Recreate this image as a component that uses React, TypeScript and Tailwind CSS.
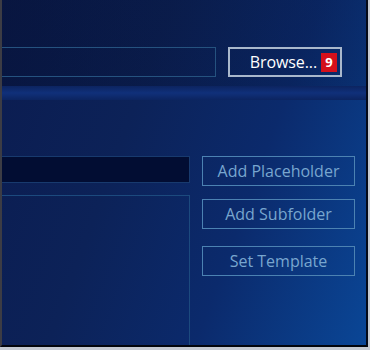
import React from "react";

export default function App() {
  const font = { fontFamily: '"Open Sans", "Noto Sans", sans-serif' };
  return (
    <div className="w-[370px] h-[350px] bg-[#c5cad2] pr-[2px] pb-[3px]" style={font}>
      <div className="h-full flex flex-col border-l-2 border-l-[#3c3c44] border-r-2 border-r-[#050a18] border-b-2 border-b-[#02050c] bg-[linear-gradient(110deg,#0b1c50_0%,#0c2258_35%,#0b2a6c_65%,#0a4696_100%)]">
        {/* top section */}
        <div className="h-[86px] flex items-start pt-[47px] bg-[linear-gradient(90deg,rgba(4,12,40,0.4),rgba(4,12,40,0.15))]">
          <div className="w-[214px] h-[30px] border border-[#25527f] border-l-0" />
          <button className="ml-[12px] w-[114px] h-[30px] border-2 border-[#a9b8cc] flex items-center justify-end pr-[3px] gap-[4px]">
            <span className="text-[16px] text-white tracking-[-0.1px]">Browse...</span>
            <span className="w-[16px] h-[19px] bg-[#d4101c] text-white text-[13px] font-bold flex items-center justify-center leading-none">9</span>
          </button>
        </div>
        {/* lighter band */}
        <div className="h-[14px] bg-[linear-gradient(180deg,#0c2460,#10307a_50%,#0c2460)]" />
        {/* lower */}
        <div className="flex-1 flex pt-[56px]">
          <div className="w-[188px] flex flex-col">
            <div className="h-[27px] bg-[#020d33] border border-[#183a6e] border-l-0" />
            <div className="flex-1 mt-[12px] border border-[#1c4a7e] border-l-0 border-b-0" />
          </div>
          <div className="ml-[12px] w-[153px] flex flex-col">
            <button className="h-[30px] border border-[#4c82b2] text-[16px] text-[#78a6cf] flex items-center justify-center">Add Placeholder</button>
            <button className="mt-[13px] h-[30px] border border-[#4c82b2] text-[16px] text-[#78a6cf] flex items-center justify-center">Add Subfolder</button>
            <button className="mt-[17px] h-[30px] border border-[#4c82b2] text-[16px] text-[#78a6cf] flex items-center justify-center">Set Template</button>
          </div>
        </div>
      </div>
    </div>
  );
}
